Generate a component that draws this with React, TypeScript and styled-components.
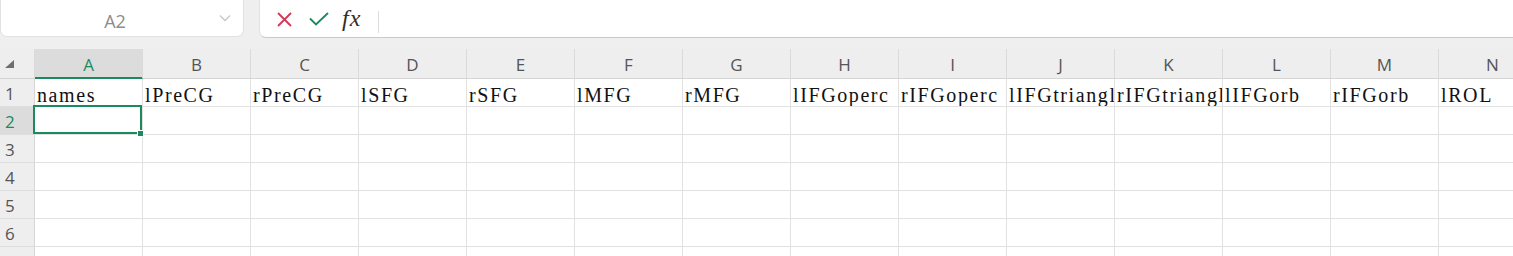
import React from 'react';
import styled, { createGlobalStyle } from 'styled-components';

const GREEN = '#1b8a5f';
const COLUMNS = ['A', 'B', 'C', 'D', 'E', 'F', 'G', 'H', 'I', 'J', 'K', 'L', 'M', 'N'];
const ROW1 = [
  'names', 'lPreCG', 'rPreCG', 'lSFG', 'rSFG', 'lMFG', 'rMFG',
  'lIFGoperc', 'rIFGoperc', 'lIFGtriangle', 'rIFGtriangle', 'lIFGorb', 'rIFGorb', 'lROL',
];
const ROW_COUNT = 7;

const GlobalStyle = createGlobalStyle`
  html, body {
    margin: 0;
    padding: 0;
    background: #efefef;
    overflow: hidden;
  }
  body {
    font-family: "Open Sans", "Liberation Sans", sans-serif;
  }
`;

const App: React.FC = () => {
  return (
    <React.Fragment>
      <GlobalStyle />
      <Page>
        <Toolbar>
          <NameBox>
            <NameText>A2</NameText>
            <Chevron width="12" height="8" viewBox="0 0 12 8">
              <path d="M1 1.5 L6 6.5 L11 1.5" fill="none" stroke="#c9c9c9" strokeWidth="1.4" />
            </Chevron>
          </NameBox>
          <FormulaBar>
            <IconButton>
              <svg width="15" height="15" viewBox="0 0 15 15">
                <path d="M1 1 L14 14 M14 1 L1 14" stroke="#d2385a" strokeWidth="1.8" fill="none" />
              </svg>
            </IconButton>
            <IconButton>
              <svg width="20" height="14" viewBox="0 0 20 14">
                <path d="M1 6.5 L7 12.5 L19 1" stroke="#1c8a5c" strokeWidth="1.9" fill="none" />
              </svg>
            </IconButton>
            <Fx>fx</Fx>
            <BarDivider />
          </FormulaBar>
        </Toolbar>

        <Sheet>
          <Corner>
            <CornerMark />
          </Corner>
          {COLUMNS.map((c) => (
            <ColHeader key={c} $active={c === 'A'}>{c}</ColHeader>
          ))}

          {Array.from({ length: ROW_COUNT }, (_, r) => (
            <React.Fragment key={r}>
              <RowHeader $active={r === 1}>{r + 1}</RowHeader>
              {COLUMNS.map((c, ci) => (
                <Cell key={c} $selected={r === 1 && ci === 0}>
                  {r === 0 ? ROW1[ci] : ''}
                </Cell>
              ))}
            </React.Fragment>
          ))}
        </Sheet>
      </Page>
    </React.Fragment>
  );
};

const Page = styled.div`
  width: 1513px;
  height: 256px;
  overflow: hidden;
`;

const Toolbar = styled.div`
  display: flex;
  gap: 15px;
  height: 38px;
  padding-bottom: 11px;
`;

const NameBox = styled.div`
  box-sizing: border-box;
  width: 244px;
  height: 37px;
  background: #fff;
  border: 1px solid #e2e2e2;
  border-top: none;
  border-radius: 0 0 7px 7px;
  display: flex;
  align-items: center;
  position: relative;
`;

const NameText = styled.span`
  flex: 1;
  text-align: center;
  padding-right: 14px;
  padding-top: 5px;
  font-size: 18px;
  color: #8c8c8c;
`;

const Chevron = styled.svg`
  position: absolute;
  right: 12px;
  top: 14px;
`;

const FormulaBar = styled.div`
  box-sizing: border-box;
  flex: 1;
  height: 38px;
  background: #fff;
  border-left: 1px solid #e2e2e2;
  border-bottom: 1px solid #c9c9c9;
  border-radius: 0 0 0 7px;
  display: flex;
  align-items: center;
  padding-left: 17px;
`;

const IconButton = styled.span`
  display: flex;
  align-items: center;
  margin-right: 17px;
  margin-top: 1px;
`;

const Fx = styled.span`
  font-family: "Liberation Serif", serif;
  font-style: italic;
  font-size: 24px;
  color: #2e2e2e;
  margin-top: -1px;
  margin-left: -4px;
  letter-spacing: 1px;
`;

const BarDivider = styled.span`
  width: 1px;
  height: 22px;
  background: #dcdcdc;
  margin-left: 17px;
  margin-top: 6px;
`;

const Sheet = styled.div`
  display: grid;
  grid-template-columns: 35px repeat(14, 108px);
  grid-auto-rows: 28px;
  grid-template-rows: 30px;
`;

const Corner = styled.div`
  box-sizing: border-box;
  background: #eeeeee;
  border-right: 1px solid #dadada;
  border-bottom: 1px solid #d4d4d4;
  padding: 11px 0 0 5px;
`;

const CornerMark = styled.div`
  width: 0;
  height: 0;
  border-left: 9px solid transparent;
  border-bottom: 8px solid #6f6f6f;
`;

const ColHeader = styled.div<{ $active?: boolean }>`
  box-sizing: border-box;
  background: ${(p) => (p.$active ? '#dcdcdc' : '#eeeeee')};
  border-right: 1px solid #dadada;
  border-bottom: 1px solid ${(p) => (p.$active ? GREEN : '#d4d4d4')};
  box-shadow: ${(p) => (p.$active ? `inset 0 -1px 0 ${GREEN}` : 'none')};
  color: ${(p) => (p.$active ? GREEN : '#555555')};
  font-size: 17px;
  display: flex;
  align-items: center;
  justify-content: center;
  padding-top: 2px;
`;

const RowHeader = styled.div<{ $active?: boolean }>`
  box-sizing: border-box;
  background: ${(p) => (p.$active ? '#dcdcdc' : '#eeeeee')};
  border-right: 1px solid #d6d6d6;
  border-bottom: 1px solid #dedede;
  color: ${(p) => (p.$active ? GREEN : '#555555')};
  font-size: 17px;
  display: flex;
  align-items: center;
  padding-left: 5px;
  padding-top: 1px;
`;

const Cell = styled.div<{ $selected?: boolean }>`
  box-sizing: border-box;
  background: #fff;
  border-right: 1px solid #e1e1e1;
  border-bottom: 1px solid #e1e1e1;
  font-family: "Liberation Serif", serif;
  font-size: 20px;
  letter-spacing: 1.6px;
  line-height: 27px;
  color: #111;
  padding: 3px 0 0 2px;
  white-space: nowrap;
  overflow: ${(p) => (p.$selected ? 'visible' : 'hidden')};
  position: relative;
  z-index: ${(p) => (p.$selected ? 2 : 'auto')};

  ${(p) =>
    p.$selected &&
    `
    &::before {
      content: '';
      position: absolute;
      left: -2px;
      top: -2px;
      right: 0;
      bottom: 0;
      border: 2px solid ${GREEN};
    }
    &::after {
      content: '';
      position: absolute;
      right: -2px;
      bottom: -3px;
      width: 5px;
      height: 5px;
      background: ${GREEN};
      border: 1px solid #fff;
    }
  `}
`;

export default App;
